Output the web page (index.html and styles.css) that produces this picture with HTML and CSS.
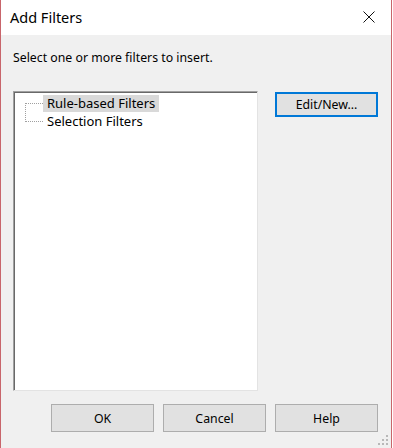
FILE: index.html
```html
<!DOCTYPE html>
<html lang="en">
<head>
    <meta charset="UTF-8">
    <title>Add Filters</title>
    <link rel="stylesheet" href="styles.css">
</head>
<body>
    <div class="dialog">
        <div class="titlebar">
            <span class="title">Add Filters</span>
            <button class="close-btn" aria-label="Close">
                <svg width="12" height="12" viewBox="0 0 12 12">
                    <path d="M0.5 0.5 L11.5 11.5 M11.5 0.5 L0.5 11.5" stroke="#111" stroke-width="1" fill="none"/>
                </svg>
            </button>
        </div>
        <div class="content">
            <p class="prompt">Select one or more filters to insert.</p>
            <div class="main-row">
                <div class="tree">
                    <div class="tree-lines"></div>
                    <div class="tree-item selected">Rule-based Filters</div>
                    <div class="tree-item">Selection Filters</div>
                </div>
                <button class="btn btn-default">Edit/New...</button>
            </div>
            <div class="footer">
                <button class="btn">OK</button>
                <button class="btn">Cancel</button>
                <button class="btn">Help</button>
            </div>
            <div class="grip">
                <span></span><span></span><span></span>
                <span></span><span></span><span></span>
            </div>
        </div>
    </div>
</body>
</html>
```

FILE: styles.css
```css
* {
    margin: 0;
    padding: 0;
    box-sizing: border-box;
}

body {
    font-family: 'Noto Sans', sans-serif;
    font-size: 12px;
    color: #000;
    background: #fff;
}

.dialog {
    width: 392px;
    height: 448px;
    border-left: 1px solid #c8656b;
    border-right: 1px solid #c8656b;
    display: flex;
    flex-direction: column;
}

.titlebar {
    height: 35px;
    background: #fff;
    display: flex;
    align-items: center;
    justify-content: space-between;
    padding: 0 16px 0 9px;
}

.title {
    font-size: 14.5px;
    color: #000;
    margin-top: -1px;
}

.close-btn {
    background: none;
    border: none;
    width: 12px;
    height: 12px;
    display: flex;
    margin-top: -2px;
}

.content {
    flex: 1;
    background: #f0f0f0;
    padding: 15px 0 0 12px;
    position: relative;
}

.prompt {
    font-size: 12.3px;
    line-height: 16px;
    height: 16px;
}

.main-row {
    display: flex;
    align-items: flex-start;
    margin-top: 25px;
}

.tree {
    width: 245px;
    height: 300px;
    background: #fff;
    border: 1px solid;
    border-color: #a0a0a0 #e3e3e3 #e3e3e3 #a0a0a0;
    box-shadow: inset 1px 1px 0 #696969;
    padding: 3px 0 0 29px;
    position: relative;
}

.tree-lines {
    position: absolute;
    left: 11px;
    top: 11px;
    width: 18px;
    height: 19px;
    border-left: 1px dotted #a0a0a0;
    border-top: 1px dotted #a0a0a0;
    border-bottom: 1px dotted #a0a0a0;
}

.tree-item {
    width: fit-content;
    font-size: 13px;
    line-height: 17px;
    padding: 0 4px;
    margin-bottom: 1px;
}

.tree-item.selected {
    background: #d9d9d9;
}

.btn {
    font-family: 'Noto Sans', sans-serif;
    font-size: 12.3px;
    color: #000;
    width: 103px;
    height: 28px;
    background: #e1e1e1;
    border: 1px solid #adadad;
}

.btn-default {
    margin-left: 17px;
    height: 25px;
    border: 2px solid #0078d7;
    margin-top: 1px;
}

.footer {
    display: flex;
    gap: 9px;
    justify-content: flex-end;
    margin-top: 13px;
    padding-right: 13px;
}

.grip {
    position: absolute;
    right: 3px;
    bottom: 3px;
    width: 10px;
    height: 10px;
    display: grid;
    grid-template-columns: repeat(3, 2px);
    grid-template-rows: repeat(3, 2px);
    gap: 2px;
}

.grip span {
    background: #b8b8b8;
}

.grip span:nth-child(1) { grid-column: 3; grid-row: 1; }
.grip span:nth-child(2) { grid-column: 2; grid-row: 2; }
.grip span:nth-child(3) { grid-column: 3; grid-row: 2; }
.grip span:nth-child(4) { grid-column: 1; grid-row: 3; }
.grip span:nth-child(5) { grid-column: 2; grid-row: 3; }
.grip span:nth-child(6) { grid-column: 3; grid-row: 3; }
```
